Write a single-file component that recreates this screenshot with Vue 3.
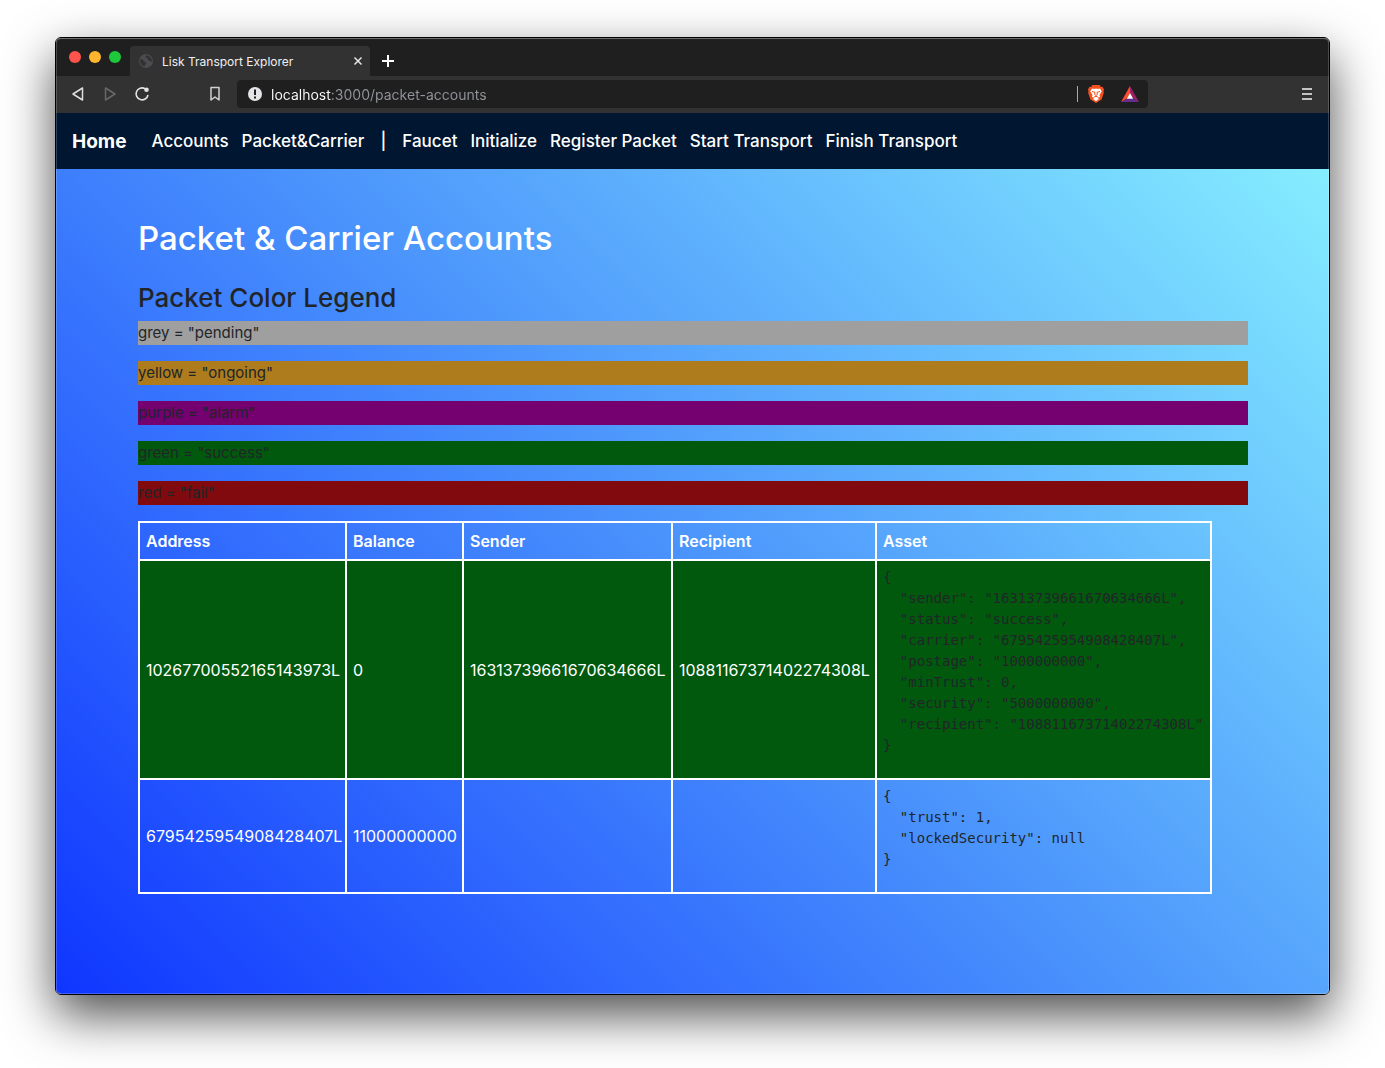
<script setup>
const primaryLinks = ['Accounts', 'Packet&Carrier']
const actionLinks = ['Faucet', 'Initialize', 'Register Packet', 'Start Transport', 'Finish Transport']

const legend = [
  { color: 'grey', status: 'pending' },
  { color: 'yellow', status: 'ongoing' },
  { color: 'purple', status: 'alarm' },
  { color: 'green', status: 'success' },
  { color: 'red', status: 'fail' },
]

const accounts = [
  {
    address: '10267700552165143973L',
    balance: '0',
    sender: '16313739661670634666L',
    recipient: '10881167371402274308L',
    color: 'green',
    asset: {
      sender: '16313739661670634666L',
      status: 'success',
      carrier: '6795425954908428407L',
      postage: '1000000000',
      minTrust: 0,
      security: '5000000000',
      recipient: '10881167371402274308L',
    },
  },
  {
    address: '6795425954908428407L',
    balance: '11000000000',
    sender: '',
    recipient: '',
    color: '',
    asset: { trust: 1, lockedSecurity: null },
  },
]

const format = (asset) => JSON.stringify(asset, null, 2)
</script>

<template>
  <div class="desktop">
    <div class="window">
      <header class="tabs">
        <div class="lights">
          <button class="light close" aria-label="Close window"></button>
          <button class="light minimise" aria-label="Minimise window"></button>
          <button class="light zoom" aria-label="Zoom window"></button>
        </div>
        <div class="tab">
          <svg width="16" height="16" viewBox="0 0 16 16">
            <circle cx="8" cy="8" r="7" fill="#4b4b50" />
            <path d="M2 6.5C4 6 5.5 7 6 8.500C7.500 8.500 8.500 9.500 8 11C7.500 12 6.500 12 6.500 13.500C4 13 2 10.500 2 8ZM8 2.500C7 4 8 5 9.500 5C10 6 9.500 7 11 7.500C12 7.500 12.500 9 14 8.500C14 5 11.500 2.500 8 2.500Z" fill="#313132" />
          </svg>
          <span class="tab-title">Lisk Transport Explorer</span>
          <button class="icon" aria-label="Close tab">
            <svg width="10" height="10" viewBox="0 0 10 10"><path d="M1.500 1.500 8.500 8.500M8.500 1.500 1.500 8.500" stroke="#e6e6e6" stroke-width="1.500" /></svg>
          </button>
        </div>
        <button class="icon new-tab" aria-label="New tab">
          <svg width="12" height="12" viewBox="0 0 12 12"><path d="M6 0V12M0 6H12" stroke="#fff" stroke-width="2" /></svg>
        </button>
      </header>

      <div class="toolbar">
        <div class="history">
          <button class="icon" aria-label="Back">
            <svg width="16" height="16" viewBox="0 0 16 16"><path d="M12.500 2V14L3 8Z" fill="none" stroke="#dedede" stroke-width="1.500" stroke-linejoin="round" /></svg>
          </button>
          <button class="icon" aria-label="Forward">
            <svg width="16" height="16" viewBox="0 0 16 16"><path d="M3.500 2V14L13 8Z" fill="none" stroke="#686868" stroke-width="1.500" stroke-linejoin="round" /></svg>
          </button>
          <button class="icon" aria-label="Reload">
            <svg width="16" height="16" viewBox="0 0 16 16"><path d="M11 2.600A6 6 0 1 0 14 9" fill="none" stroke="#e4e4e4" stroke-width="1.600" /><circle cx="12.500" cy="3.700" r="2.300" fill="#e4e4e4" /></svg>
          </button>
        </div>
        <button class="icon bookmark" aria-label="Bookmark">
          <svg width="16" height="16" viewBox="0 0 16 16"><path d="M4 1.500H12V14L8 11 4 14Z" fill="none" stroke="#d2d2d2" stroke-width="1.500" stroke-linejoin="round" /></svg>
        </button>
        <div class="address">
          <svg width="16" height="16" viewBox="0 0 16 16"><circle cx="8" cy="8" r="7" fill="#e4e5e8" /><path d="M7 3.500H9V9H7ZM7 10.500H9V12.500H7Z" fill="#1f1f1f" /></svg>
          <input class="url" type="text" aria-label="Address" value="localhost:3000/packet-accounts" />
          <span class="divider"></span>
          <button class="icon" aria-label="Shields">
            <svg width="16" height="18" viewBox="0 0 16 18">
              <path d="M4.500 0H11.500L13 2 14.500 1.800 16 4.500 15.500 6.500 15.800 8 13.500 14.500 8 18 2.500 14.500 .2 8 .5 6.500 0 4.500 1.500 1.800 3 2Z" fill="#f4511f" />
              <path d="M4 3.500 6 4 8 3.500 10 4 12 3.500 13.700 6.300 11.500 10 12 12 9.500 12.700 11 14 8 16.200 5 14 6.500 12.700 4 12 4.500 10 2.300 6.300Z" fill="#fff" />
              <path d="M4 6.500 7 7.300 6.600 9.500 8 10.500 9.400 9.500 9 7.300 12 6.500M6.200 12 8 11.300 9.800 12" fill="none" stroke="#f4511f" stroke-width="1" />
            </svg>
          </button>
          <button class="icon" aria-label="Rewards">
            <svg width="18" height="16" viewBox="0 0 18 16">
              <path d="M9 0 0 16 6 12.500 9 7Z" fill="#ff4b2b" />
              <path d="M9 0 18 16 12 12.500 9 7Z" fill="#9e1f63" />
              <path d="M0 16H18L12 12.500H6Z" fill="#662d91" />
              <path d="M9 7 12.200 12.700H5.800Z" fill="#fff" />
            </svg>
          </button>
        </div>
        <button class="icon menu" aria-label="Menu">
          <svg width="10" height="12" viewBox="0 0 10 12"><path d="M0 1H10M0 6H10M0 11H10" stroke="#c4c4c4" stroke-width="2" /></svg>
        </button>
      </div>

      <div class="page">
        <nav class="navbar">
          <a class="brand" href="#">Home</a>
          <a v-for="link in primaryLinks" :key="link" href="#">{{ link }}</a>
          <span class="pipe">|</span>
          <a v-for="link in actionLinks" :key="link" href="#">{{ link }}</a>
        </nav>

        <main class="content">
          <h1>Packet &amp; Carrier Accounts</h1>
          <h2>Packet Color Legend</h2>
          <p v-for="item in legend" :key="item.color" :class="item.color">{{ item.color }} = "{{ item.status }}"</p>

          <table>
            <colgroup>
              <col class="col-address" />
              <col class="col-balance" />
              <col class="col-sender" />
              <col class="col-recipient" />
              <col class="col-asset" />
            </colgroup>
            <thead>
              <tr>
                <th>Address</th>
                <th>Balance</th>
                <th>Sender</th>
                <th>Recipient</th>
                <th>Asset</th>
              </tr>
            </thead>
            <tbody>
              <tr v-for="account in accounts" :key="account.address" :class="account.color">
                <td>{{ account.address }}</td>
                <td>{{ account.balance }}</td>
                <td>{{ account.sender }}</td>
                <td>{{ account.recipient }}</td>
                <td><pre>{{ format(account.asset) }}</pre></td>
              </tr>
            </tbody>
          </table>
        </main>
      </div>
    </div>
  </div>
</template>

<style>
body {
  background: #fff;
  overflow-x: hidden;
}
</style>

<style scoped>
* {
  box-sizing: border-box;
}

.desktop {
  display: flex;
  min-height: 100vh;
  padding: 37px 55px 73px;
  overflow: hidden;
  font-family: Inter, Roboto, sans-serif;
}

.window {
  position: relative;
  display: flex;
  flex: 1;
  flex-direction: column;
  min-width: 0;
  border: 1px solid #000;
  border-radius: 6px;
  overflow: hidden;
  box-shadow: 0 20px 50px rgba(0, 0, 0, 0.7);
}

.window::after {
  content: '';
  position: absolute;
  inset: 0;
  border: 1px solid rgba(255, 255, 255, 0.2);
  border-top-color: rgba(255, 255, 255, 0.35);
  border-radius: 5px;
  pointer-events: none;
}

button {
  padding: 0;
  border: 0;
  background: none;
}

.icon {
  display: flex;
  flex: none;
}

svg {
  display: block;
  flex: none;
}

.tabs {
  display: flex;
  align-items: flex-end;
  height: 38px;
  padding-left: 13px;
  background: #1f1f1f;
}

.lights {
  display: flex;
  gap: 8px;
  align-self: center;
  margin-right: 9px;
}

.light {
  width: 12px;
  height: 12px;
  border-radius: 50%;
}

.close {
  background: #ff544d;
}

.minimise {
  background: #ffb52e;
}

.zoom {
  background: #1fc83b;
}

.tab {
  display: flex;
  align-items: center;
  gap: 8px;
  width: 240px;
  height: 30px;
  padding: 0 7px 0 8px;
  border-radius: 4px 4px 0 0;
  background: #323232;
}

.tab-title {
  flex: 1;
  color: #f0f0f0;
  font-size: 12px;
}

.new-tab {
  margin: 0 0 9px 12px;
}

.toolbar {
  display: flex;
  align-items: center;
  height: 37px;
  padding: 0 17px 1px 14px;
  background: #323232;
}

.history {
  display: flex;
  gap: 16px;
}

.bookmark {
  margin: 0 14px 0 57px;
}

.address {
  display: flex;
  flex: 1;
  align-items: center;
  height: 28px;
  padding: 0 9px 0 10px;
  border-radius: 4px;
  background: #1f1f1f;
}

.url {
  flex: 1;
  min-width: 0;
  margin-left: 8px;
  padding: 0;
  border: 0;
  outline: 0;
  background: linear-gradient(90deg, #fff 60px, #92959b 60px);
  background-clip: text;
  color: transparent;
  font-family: inherit;
  font-size: 14px;
}

.divider {
  width: 1px;
  height: 16px;
  margin-right: 10px;
  background: #aaa;
}

.address .icon + .icon {
  margin-left: 17px;
}

.menu {
  margin-left: 154px;
}

.page {
  flex: 1;
  background: linear-gradient(45deg, #0f36ff 0%, #4b94fc 50%, #88f2ff 100%);
}

.navbar {
  display: flex;
  align-items: center;
  gap: 13px;
  height: 56px;
  padding: 0 16px;
  background: #001631;
}

.navbar a,
.pipe {
  color: #fff;
  font-size: 17px;
  font-weight: 500;
  text-decoration: none;
  white-space: nowrap;
}

.navbar .brand {
  margin-right: 12px;
  font-size: 19px;
  font-weight: 700;
}

.pipe {
  margin: 0 3px;
}

.content {
  padding: 49px 81px 80px 82px;
}

h1,
h2,
p,
pre {
  margin: 0;
}

h1 {
  margin-bottom: 23px;
  color: #fff;
  font-size: 33px;
  font-weight: 500;
  line-height: 40px;
}

h2 {
  margin-bottom: 6px;
  color: #212529;
  font-size: 26px;
  font-weight: 500;
  line-height: 34px;
}

p {
  margin-bottom: 16px;
  color: #212529;
  font-size: 15px;
  line-height: 24px;
}

.grey {
  background: #9f9f9f;
}

.yellow {
  background: #ae7c1d;
}

.purple {
  background: #750070;
}

.green {
  background: #01590d;
}

.red {
  background: #800a0e;
}

table {
  width: 1074px;
  table-layout: fixed;
  border-collapse: collapse;
  color: #fff;
  font-size: 16px;
  line-height: 24px;
}

.col-address {
  width: 207px;
}

.col-balance {
  width: 117px;
}

.col-sender {
  width: 209px;
}

.col-recipient {
  width: 204px;
}

th,
td {
  padding: 6px;
  border: 2px solid #fff;
  text-align: left;
}

th {
  font-weight: 600;
}

pre {
  margin-bottom: 16px;
  color: #212529;
  font-family: 'DejaVu Sans Mono', monospace;
  font-size: 14px;
  line-height: 21px;
}
</style>
